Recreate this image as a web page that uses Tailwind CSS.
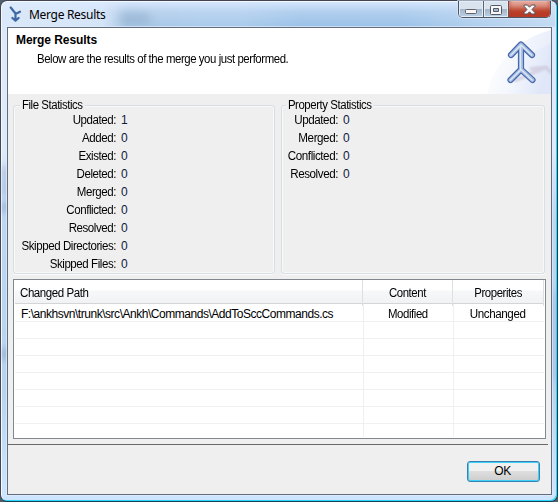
<!DOCTYPE html>
<html lang="en">
<head>
<meta charset="utf-8">
<title>Merge Results</title>
<script src="https://cdn.jsdelivr.net/npm/@tailwindcss/browser@4"></script>
</head>
<body class="w-[558px] h-[502px] overflow-hidden bg-[#4d606b] font-['Liberation_Sans',Arial,sans-serif] text-[12px] leading-[18px] tracking-[-0.45px] text-black">
<div class="relative flex h-[502px] w-[558px] flex-col rounded-[7px] border border-t-[#424355] border-l-[#454654] border-r-[#164255] border-b-[#164255] bg-[linear-gradient(180deg,#dbe9fa_0px,#dceafa_150px,#bdd6f2_220px,#b9d3ef_390px,#c6e0fa_460px,#cee5ff_500px)] px-[6px] pb-[6px] shadow-[inset_-1px_-1px_0_#27d7fb,inset_1px_1px_0_#f3faff]">
  <div class="absolute left-[2px] top-[165px] h-[30px] w-[4px] bg-[#8298bd]/60 blur-[3px]"></div>
  <div class="absolute left-[2px] top-[200px] h-[12px] w-[4px] bg-[#617da8]/60 blur-[3px]"></div>
  <div class="absolute left-[2px] top-[347px] h-[12px] w-[4px] bg-[#617da8]/60 blur-[3px]"></div>
  <div class="absolute right-[2px] top-[290px] h-[90px] w-[4px] bg-[#6793bf]/50 blur-[5px]"></div>
  <div class="absolute left-[1px] right-[2px] top-[1px] h-[25px] rounded-t-[6px] bg-[linear-gradient(90deg,#e5effb_0px,#dce9f8_100px,#a4c2e0_125px,#a6c8e9_200px,#a6c8e9_240px,#93bce4_300px,#94bde5_400px,#a6c8ea_450px,#c6dcf2_554px)]"></div>
  <div class="absolute left-[1px] right-[2px] top-[1px] h-[25px] rounded-t-[6px] bg-linear-to-b from-[#dbeaff]/90 via-[#cfe1f8]/50 via-40% to-[#b3d4f3]/20"></div>
  <div class="absolute left-[118px] top-[12px] h-[11px] w-[32px] rounded-full bg-[#7d9dbd]/40 blur-[4px]"></div>

  <header class="relative flex h-[26px] shrink-0 items-center">
    <svg class="ml-[2px] mt-[1px] h-[18px] w-[15px]" viewBox="0 0 15 18" fill="none" stroke="#3f69a3" stroke-width="2.2" stroke-linecap="round" stroke-linejoin="round"><path d="M1.700 1.500 6.500 7.500v7M11 5.700 6.500 8M3.400 12l3.100 2.700L9.600 12"/></svg>
    <h1 class="ml-[5px] mt-[1px] font-['Noto_Sans','Open_Sans',sans-serif] text-[12px] tracking-[-0.3px]">Merge Results</h1>
    <div class="absolute right-0 top-0 flex h-[17px] w-[93px] overflow-hidden rounded-b-[5px] border border-t-0 border-[#4b5766] shadow-[0_0_0_1px_#dceafa99]">
      <div class="flex w-[25px] items-center justify-center border-r border-[#566578] bg-linear-to-b from-[#d9e3ed] from-48% via-[#a3b4c7] via-50% to-[#bdd2e5] shadow-[inset_0_0_0_1px_#e3edf6]">
        <svg class="h-[5px] w-[12px] mt-[5px]" viewBox="0 0 12 5"><rect x=".5" y=".5" width="11" height="4" rx="1" fill="#f7f7f7" stroke="#64616a"/></svg>
      </div>
      <div class="flex w-[25px] items-center justify-center border-r border-[#644e57] bg-linear-to-b from-[#d9e3ed] from-48% via-[#a3b4c7] via-50% to-[#bdd2e5] shadow-[inset_0_0_0_1px_#e3edf6]">
        <svg class="h-[10px] w-[12px] mt-[1px]" viewBox="0 0 12 10"><path fill-rule="evenodd" d="M1.500.500h9a1 1 0 0 1 1 1v7a1 1 0 0 1-1 1h-9a1 1 0 0 1-1-1v-7a1 1 0 0 1 1-1ZM3.500 3.500v3h5v-3Z" fill="#f7f7f7" stroke="#555967"/></svg>
      </div>
      <div class="flex flex-1 items-center justify-center bg-linear-to-b from-[#e6ab9f] from-0% via-[#d27e6c] via-47% to-[#c96a51] shadow-[inset_0_-8px_4px_#b83c25,inset_0_0_0_1px_#edb1a6]">
        <svg class="h-[11px] w-[13px] mt-[1px]" viewBox="0 0 13 11"><path d="M1 1h3.400l2.100 2.200L8.600 1H12v1.300L9 5.500l3 3.200V10H8.600L6.500 7.800 4.400 10H1V8.700l3-3.200-3-3.200Z" fill="#f8f8f8" stroke="#58525d" stroke-linejoin="round"/></svg>
      </div>
    </div>
  </header>

  <main class="relative flex h-[468px] w-[545px] shrink-0 flex-col border border-[#626c7d] bg-[#efefef] outline outline-[#dfedfb]/70">
    <section class="flex h-[66px] shrink-0 justify-between bg-white">
      <div>
        <h2 class="ml-[8px] mt-[3px] text-[12px] font-bold leading-[18px] tracking-[-0.08px]">Merge Results</h2>
        <p class="ml-[29px] mt-[1px] origin-left scale-x-95 leading-[18px]">Below are the results of the merge you just performed.</p>
      </div>
      <svg class="h-[66px] w-[66px]" viewBox="0 0 66 66">
        <defs>
          <linearGradient id="sky" x1="0" y1="0" x2="1" y2=".3"><stop offset=".1" stop-color="#fff"/><stop offset="1" stop-color="#d9e2f6"/></linearGradient>
          <filter id="soft"><feGaussianBlur stdDeviation=".8"/></filter>
        </defs>
        <path d="M2 66C8 34 35 10 66 2v64Z" fill="url(#sky)" opacity=".6"/>
        <path d="M18 66C25 40 43 25 66 15v51Z" fill="url(#sky)" opacity=".6"/>
        <path d="M29 53 60 40M45 41l16-2 5 6" fill="none" stroke="#cfcadd" stroke-width="3.500" opacity=".8" filter="url(#soft)"/>
        <g fill="none" stroke-linecap="round" stroke-linejoin="round">
          <path d="M36 17v24M26 27l10-10.500L47 27M25.500 52 36 41.500 47.500 52" stroke="#4669ad" stroke-width="6.200"/>
          <path d="M36 17v24M26 27l10-10.500L47 27M25.500 52 36 41.500 47.500 52" stroke="#a9bee2" stroke-width="3.800"/>
          <path d="M35.500 18v23M26 27l10-10 10.500 10M25.500 52 36 41.500 47 52" stroke="#dce8f2" stroke-width="1.300"/>
        </g>
      </svg>
    </section>

    <section class="flex h-[184px] shrink-0 gap-[6px] pl-[5px] pt-[5px]">
      <div class="relative h-[175px] w-[262px]">
        <div class="absolute inset-x-0 bottom-0 top-[6px] rounded-[3px] border border-[#d5dfe5] shadow-[inset_0_0_0_1px_#f8f8f8,0_1px_0_#fafafa]"></div>
        <h3 class="absolute left-[7px] top-[-1px] h-[14px] origin-left scale-x-95 bg-[#efefef] px-[2px] leading-[14px]">File Statistics</h3>
        <div class="relative grid auto-rows-[18px] grid-cols-[103px_1fr] gap-x-[5px] pt-[12px] [&>span]:origin-right [&>span]:scale-x-96 [&>span]:text-right [&>span]:whitespace-nowrap [&>b]:font-normal [&>b]:text-[#10203c]">
          <span>Updated:</span><b>1</b>
          <span>Added:</span><b>0</b>
          <span>Existed:</span><b>0</b>
          <span>Deleted:</span><b>0</b>
          <span>Merged:</span><b>0</b>
          <span>Conflicted:</span><b>0</b>
          <span>Resolved:</span><b>0</b>
          <span>Skipped Directories:</span><b>0</b>
          <span>Skipped Files:</span><b>0</b>
        </div>
      </div>
      <div class="relative h-[175px] w-[264px]">
        <div class="absolute inset-x-0 bottom-0 top-[6px] rounded-[3px] border border-[#d5dfe5] shadow-[inset_0_0_0_1px_#f8f8f8,0_1px_0_#fafafa]"></div>
        <h3 class="absolute left-[5px] top-[-1px] h-[14px] origin-left scale-x-95 bg-[#efefef] px-[2px] leading-[14px]">Property Statistics</h3>
        <div class="relative grid auto-rows-[18px] grid-cols-[57px_1fr] gap-x-[5px] pt-[12px] [&>span]:origin-right [&>span]:scale-x-97 [&>span]:text-right [&>b]:font-normal [&>b]:text-[#10203c]">
          <span>Updated:</span><b>0</b>
          <span>Merged:</span><b>0</b>
          <span>Conflicted:</span><b>0</b>
          <span>Resolved:</span><b>0</b>
        </div>
      </div>
    </section>

    <section class="ml-[5px] mt-[1px] flex h-[160px] w-[533px] shrink-0 flex-col border border-[#828790] bg-white px-px pb-px">
      <div class="grid h-[24px] shrink-0 grid-cols-[348px_90px_1fr] border-b border-[#d5d5d5] bg-linear-to-b from-white from-45% via-[#f7f8fa] via-46% to-[#f1f2f4] leading-[26px]">
        <span class="border-r border-[#dedfe1] pl-[5px]"><span class="inline-block origin-left scale-x-96">Changed Path</span></span>
        <span class="border-r border-[#dedfe1] text-center"><span class="inline-block scale-x-95">Content</span></span>
        <span class="border-r border-[#dedfe1] text-center"><span class="inline-block scale-x-95">Properites</span></span>
      </div>
      <div class="grid flex-1 auto-rows-[17px] grid-cols-[349px_90px_1fr] grid-rows-[18px] [&>*]:border-b [&>*]:border-[#f0f0f0] [&>*:nth-child(3n+1)]:border-r [&>*:nth-child(3n+2)]:border-r [&>*:nth-last-child(-n+3)]:border-b-0">
        <span class="pl-[6px] leading-[20px] tracking-[-0.47px]">F:\ankhsvn\trunk\src\Ankh\Commands\AddToSccCommands.cs</span>
        <span class="pr-px text-center leading-[20px]"><span class="inline-block scale-x-95">Modified</span></span>
        <span class="pr-[2px] text-center leading-[20px]"><span class="inline-block scale-x-97">Unchanged</span></span>
        <i></i><i></i><i></i><i></i><i></i><i></i><i></i><i></i><i></i>
        <i></i><i></i><i></i><i></i><i></i><i></i><i></i><i></i><i></i>
        <i class="h-[13px]"></i><i class="h-[13px]"></i><i></i>
      </div>
    </section>

    <footer class="mt-[5px] mr-[3px] flex h-[50px] shrink-0 justify-end border-t border-[#696969]">
      <button class="mr-[8px] mt-[16px] h-[21px] w-[73px] rounded-[3px] border border-[#3c7fb1] bg-linear-to-b from-[#f1f1f1] from-45% via-[#dedede] via-50% to-[#cdcdcd] pr-[2px] leading-[19px] tracking-[-0.3px] shadow-[inset_0_0_0_1px_#3bd0fa]">OK</button>
    </footer>
  </main>
</div>
</body>
</html>
